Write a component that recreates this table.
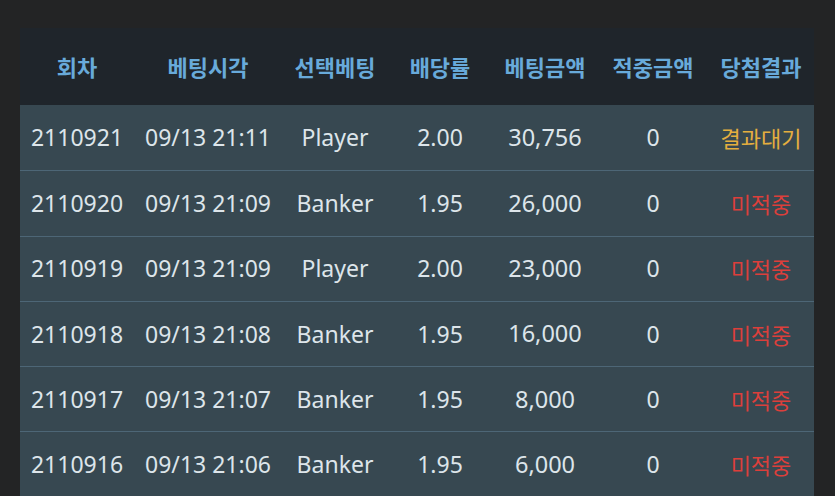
const rows = [
  { no: "2110921", time: "09/13 21:11", pick: "Player", odds: "2.00", bet: "30,756", win: "0", result: "결과대기" },
  { no: "2110920", time: "09/13 21:09", pick: "Banker", odds: "1.95", bet: "26,000", win: "0", result: "미적중" },
  { no: "2110919", time: "09/13 21:09", pick: "Player", odds: "2.00", bet: "23,000", win: "0", result: "미적중" },
  { no: "2110918", time: "09/13 21:08", pick: "Banker", odds: "1.95", bet: "16,000", win: "0", result: "미적중" },
  { no: "2110917", time: "09/13 21:07", pick: "Banker", odds: "1.95", bet: "8,000", win: "0", result: "미적중" },
  { no: "2110916", time: "09/13 21:06", pick: "Banker", odds: "1.95", bet: "6,000", win: "0", result: "미적중" },
];

const headers = ["회차", "베팅시각", "선택베팅", "배당률", "베팅금액", "적중금액", "당첨결과"];

const cols = "grid grid-cols-[114px_148px_106px_104px_106px_110px_106px]";

export default function App() {
  return (
    <main
      className="h-[496px] w-[835px] overflow-hidden bg-[#232425] pl-[20px] pt-[28px]"
      style={{ fontFamily: '"Noto Sans", "Noto Sans CJK KR", sans-serif' }}
    >
      <div className="w-[794px]">
        {/* HEADER */}
        <div
          className={`${cols} h-[77px] items-center bg-[#1f252b] text-center text-[22px] font-bold text-[#68aada]`}
          style={{ fontFamily: '"Noto Sans CJK KR", sans-serif' }}
        >
          {headers.map((h) => (
            <div key={h}>{h}</div>
          ))}
        </div>

        {/* ROWS */}
        {rows.map((r, i) => (
          <div
            key={r.no}
            className={`${cols} h-[65.3px] items-center bg-[#374851] text-center text-[23px] text-[#dde5ea] ${i > 0 ? "border-t border-[#4d6676]" : ""}`}
          >
            <div>{r.no}</div>
            <div>{r.time}</div>
            <div>{r.pick}</div>
            <div>{r.odds}</div>
            <div className="text-[23.5px]">{r.bet}</div>
            <div>{r.win}</div>
            <div
              className={`text-[22px] ${r.result === "결과대기" ? "text-[#e4ae3f]" : "text-[#dc3f3b]"}`}
              style={{ fontFamily: '"Noto Sans CJK KR", sans-serif' }}
            >
              {r.result}
            </div>
          </div>
        ))}
      </div>
    </main>
  );
}
